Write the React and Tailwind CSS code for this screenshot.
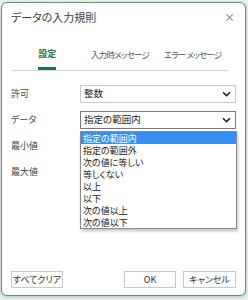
import React from "react";

const options = [
  "指定の範囲内",
  "指定の範囲外",
  "次の値に等しい",
  "等しくない",
  "以上",
  "以下",
  "次の値以上",
  "次の値以下",
];

function Chevron() {
  return (
    <svg width="9" height="6" viewBox="0 0 9 6" className="shrink-0">
      <path d="M1 1.2 L4.5 4.6 L8 1.2" fill="none" stroke="#222" strokeWidth="1.6" />
    </svg>
  );
}

function Select({ value, active }) {
  return (
    <div
      className={`flex h-[18px] w-[156px] items-center justify-between border bg-white pl-[3px] pr-[4px] ${
        active ? "border-[#7a7a7a]" : "border-[#c9c9c9]"
      }`}
    >
      <span className="text-[9.5px] leading-none text-[#222]">{value}</span>
      <Chevron />
    </div>
  );
}

function Button({ children, className = "" }) {
  return (
    <div
      className={`flex h-[17px] items-center justify-center border border-[#c8c8c8] bg-white text-[9px] text-[#333] ${className}`}
    >
      {children}
    </div>
  );
}

export default function App() {
  return (
    <div
      className="h-[300px] w-[248px] overflow-hidden bg-[#ececec] pl-[1px] pt-[2px] [font-family:'Noto_Sans_CJK_JP','Noto_Sans',sans-serif] [font-feature-settings:'palt']"
    >
      <div className="relative flex h-[294px] w-[245px] flex-col rounded-[6px] border border-[#4e9b6b] bg-white pl-[9px] shadow-[0_1px_3px_rgba(0,0,0,0.2)]">
        {/* Title */}
        <div className="flex h-[28px] w-[225px] items-center justify-between">
          <span className="text-[11px] text-[#3c3c3c]">データの入力規則</span>
          <span className="pr-[1px] text-[11px] leading-none text-[#666]">×</span>
        </div>

        {/* Tabs */}
        <div className="mt-[14px] w-[218px] border-b border-[#d6d6d6]">
          <div className="grid grid-cols-3">
            <div className="flex flex-col items-center">
              <span className="h-[18px] text-[9px] leading-[18px] font-semibold text-[#217346]">設定</span>
              <div className="mt-[4px] h-[3px] w-[18px] bg-[#217346]" />
            </div>
            <div className="flex flex-col items-center">
              <span className="h-[18px] whitespace-nowrap text-[8.5px] leading-[18px] tracking-[-0.8px] text-[#555]">入力時メッセージ</span>
            </div>
            <div className="flex flex-col items-center">
              <span className="h-[18px] whitespace-nowrap text-[8.5px] leading-[18px] tracking-[-0.8px] text-[#555]">エラー メッセージ</span>
            </div>
          </div>
        </div>

        {/* Form */}
        <div className="mt-[14px] flex flex-col gap-[8px]">
          <div className="flex h-[18px] items-center">
            <span className="w-[69px] text-[9px] text-[#444]">許可</span>
            <Select value="整数" />
          </div>
          <div className="flex h-[18px] items-center">
            <span className="w-[69px] text-[9px] text-[#444]">データ</span>
            <Select value="指定の範囲内" active />
          </div>
          <div className="flex h-[18px] items-center">
            <span className="w-[69px] text-[9px] text-[#444]">最小値</span>
          </div>
          <div className="flex h-[18px] items-center">
            <span className="w-[69px] text-[9px] text-[#444]">最大値</span>
          </div>
        </div>

        {/* Buttons */}
        <div className="mt-auto mb-[7px] flex w-[225px] items-center">
          <Button className="w-[52px]">すべてクリア</Button>
          <div className="flex-1" />
          <Button className="w-[52px]">OK</Button>
          <Button className="ml-[7px] w-[53px]">キャンセル</Button>
        </div>

        {/* Dropdown list */}
        <div className="absolute left-[78px] top-[128px] w-[157px] border border-[#8a8a8a] bg-white shadow-[1px_2px_3px_rgba(0,0,0,0.25)]">
          {options.map((o, i) => (
            <div
              key={o}
              className={`flex h-[12px] items-center pl-[2px] text-[9px] leading-none ${
                i === 0 ? "bg-[#3390f2] text-white" : "text-[#222]"
              }`}
            >
              {o}
            </div>
          ))}
        </div>
      </div>
    </div>
  );
}
